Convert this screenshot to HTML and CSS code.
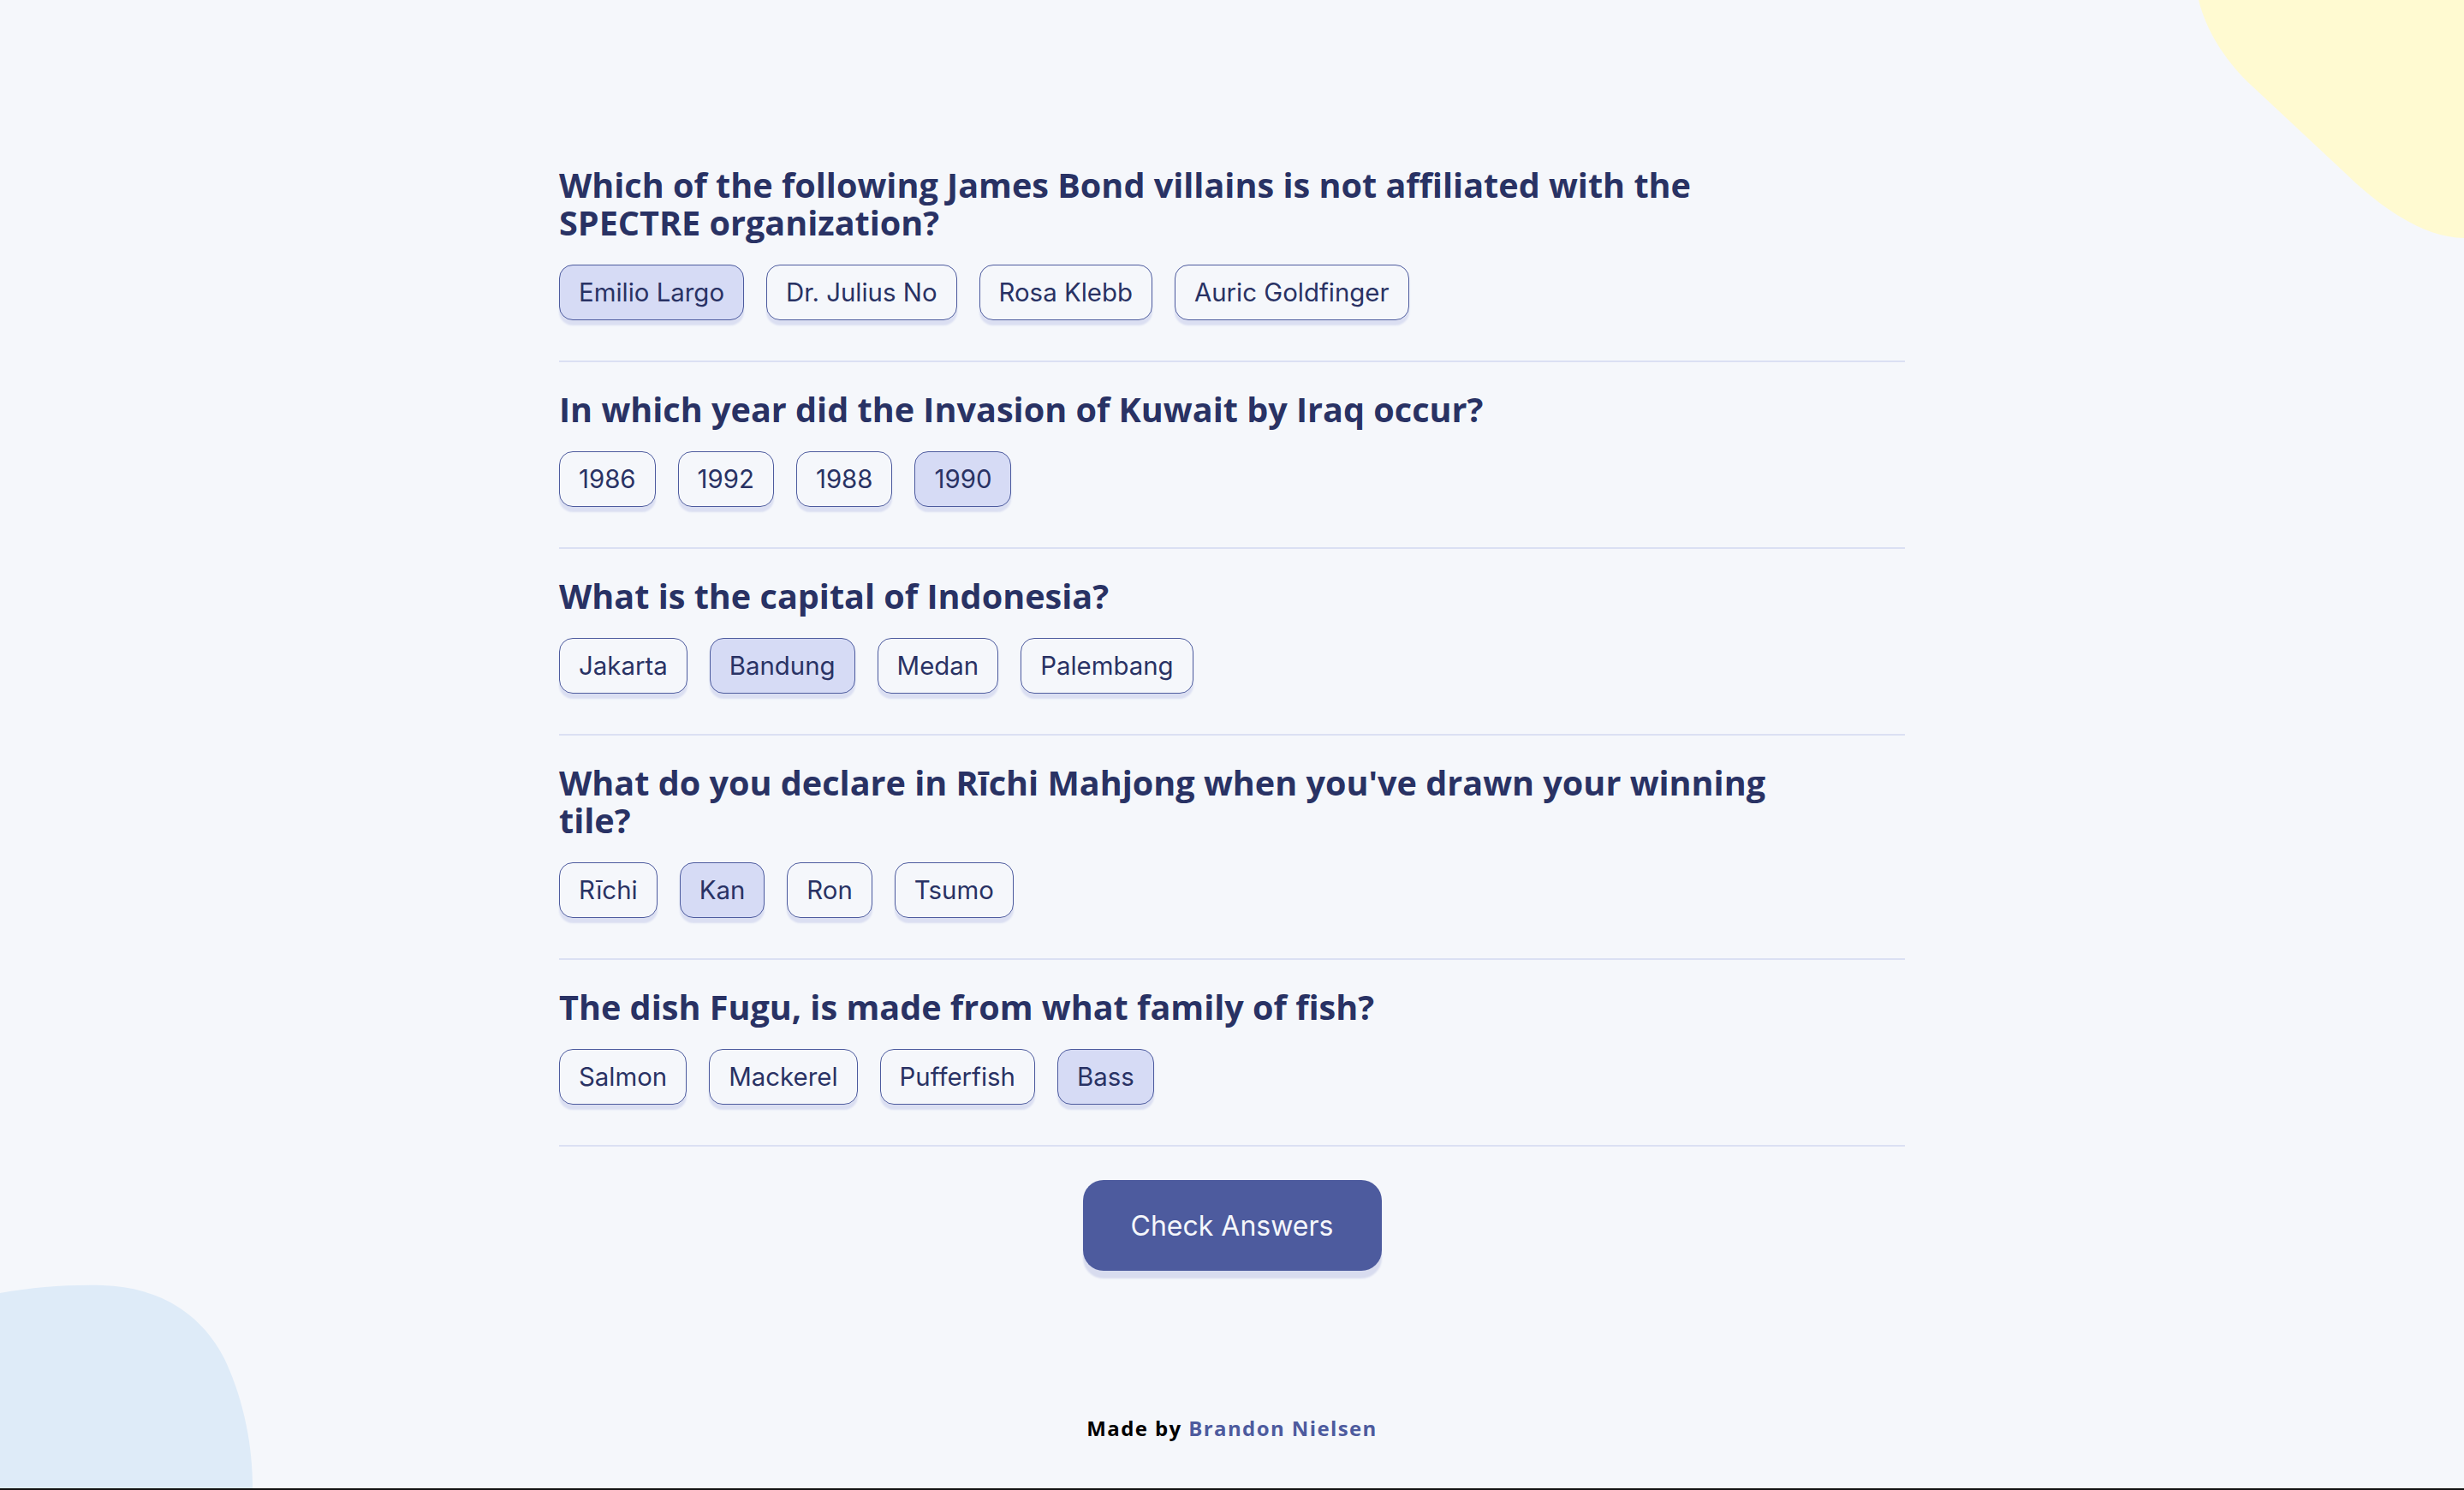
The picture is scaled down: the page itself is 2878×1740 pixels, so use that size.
FILE: index.html
```html
<!DOCTYPE html>
<html lang="en">
<head>
<meta charset="utf-8">
<title>Quizzical</title>
<link rel="stylesheet" href="styles.css">
</head>
<body>
<div class="page">
  <svg class="blob blob-yellow" width="320" height="290" viewBox="0 0 320 290" aria-hidden="true">
    <path d="M10 0 C 20 40, 45 75, 72 100 L179 200 C 220 240, 270 277, 320 278 L320 0 Z" fill="#FFFAD1"/>
  </svg>
  <svg class="blob blob-blue" width="300" height="240" viewBox="0 0 300 240" aria-hidden="true">
    <path d="M0 12 C 40 5, 80 2, 120 3 C 190 5, 240 40, 265 95 C 285 140, 295 190, 295 240 L0 240 Z" fill="#DEEBF8"/>
  </svg>

  <main class="quiz">
    <section class="question">
      <h2 class="question-title">Which of the following James Bond villains is not affiliated with the SPECTRE organization?</h2>
      <div class="answers">
        <button class="answer selected">Emilio Largo</button>
        <button class="answer">Dr. Julius No</button>
        <button class="answer">Rosa Klebb</button>
        <button class="answer">Auric Goldfinger</button>
      </div>
    </section>
    <section class="question">
      <h2 class="question-title">In which year did the Invasion of Kuwait by Iraq occur?</h2>
      <div class="answers">
        <button class="answer">1986</button>
        <button class="answer">1992</button>
        <button class="answer">1988</button>
        <button class="answer selected">1990</button>
      </div>
    </section>
    <section class="question">
      <h2 class="question-title">What is the capital of Indonesia?</h2>
      <div class="answers">
        <button class="answer">Jakarta</button>
        <button class="answer selected">Bandung</button>
        <button class="answer">Medan</button>
        <button class="answer">Palembang</button>
      </div>
    </section>
    <section class="question">
      <h2 class="question-title">What do you declare in Rīchi Mahjong when you've drawn your winning tile?</h2>
      <div class="answers">
        <button class="answer">Rīchi</button>
        <button class="answer selected">Kan</button>
        <button class="answer">Ron</button>
        <button class="answer">Tsumo</button>
      </div>
    </section>
    <section class="question">
      <h2 class="question-title">The dish Fugu, is made from what family of fish?</h2>
      <div class="answers">
        <button class="answer">Salmon</button>
        <button class="answer">Mackerel</button>
        <button class="answer">Pufferfish</button>
        <button class="answer selected">Bass</button>
      </div>
    </section>
    <div class="actions">
      <button class="check-btn">Check Answers</button>
    </div>
  </main>

  <footer class="footer">Made by <span class="author">Brandon Nielsen</span></footer>
</div>
</body>
</html>
```

FILE: styles.css
```css
html {
  background: #111;
  margin: 0;
  padding: 0;
}

body {
  margin: 0;
  padding: 0;
}

.page {
  position: relative;
  height: 1738px;
  background: #F5F7FB;
  overflow: hidden;
  display: flex;
  flex-direction: column;
  align-items: center;
}

.blob {
  position: absolute;
  display: block;
}

.blob-yellow {
  top: 0;
  right: 0;
}

.blob-blue {
  left: 0;
  bottom: 0;
}

.quiz {
  position: relative;
  width: 1572px;
  padding-top: 194px;
  display: flex;
  flex-direction: column;
}

.question {
  padding: 33px 0 47px;
  border-bottom: 2px solid #DBE0F3;
}

.question:first-child {
  padding-top: 0;
}

.question-title {
  margin: 0 0 27px;
  max-width: 1450px;
  font-family: "Open Sans", "Lato", sans-serif;
  font-weight: 700;
  font-size: 39.6px;
  line-height: 44px;
  color: #293264;
  letter-spacing: 0;
}

.answers {
  display: flex;
  gap: 26px;
}

.answer {
  height: 65px;
  padding: 0 22px;
  border: 1.5px solid #4D5B9E;
  border-radius: 16px;
  background: transparent;
  box-shadow: 0 6px 2px #DBDFF2;
  font-family: "Inter", "Roboto", sans-serif;
  font-size: 29.4px;
  font-weight: 400;
  color: #293264;
  cursor: pointer;
}

.answer.selected {
  background: #D6DBF5;
}

.actions {
  display: flex;
  justify-content: center;
  padding-top: 39px;
}

.check-btn {
  width: 349px;
  height: 106px;
  border: none;
  border-radius: 24px;
  background: #4D5B9E;
  box-shadow: 0 9px 2px #D8DCEF;
  font-family: "Inter", "Roboto", sans-serif;
  font-size: 32px;
  font-weight: 400;
  color: #F5F7FB;
  cursor: pointer;
}

.footer {
  position: relative;
  margin-top: auto;
  margin-bottom: 54px;
  font-family: "Open Sans", "Lato", sans-serif;
  font-weight: 700;
  font-size: 24px;
  line-height: 32px;
  letter-spacing: 1.4px;
  color: #000;
}

.author {
  color: #4D5B9E;
}
```
